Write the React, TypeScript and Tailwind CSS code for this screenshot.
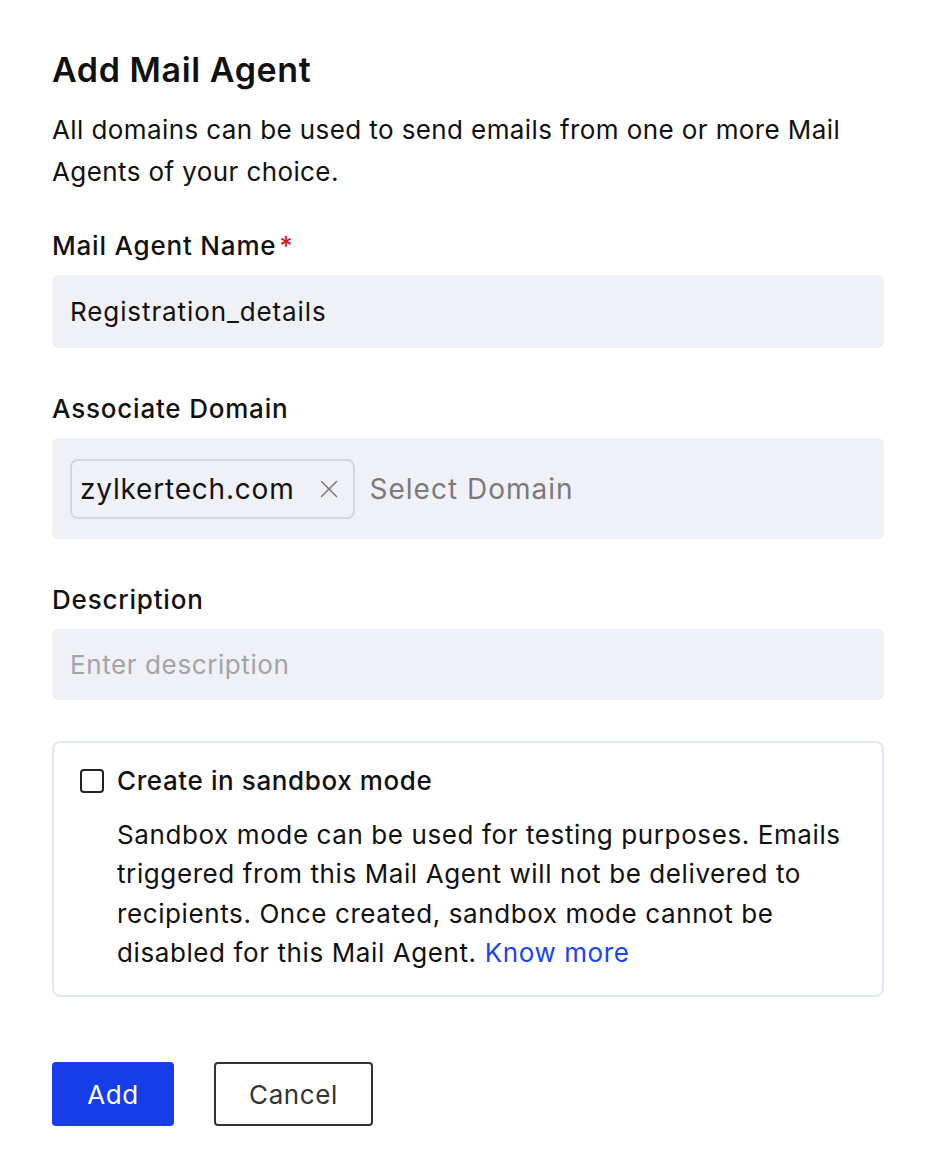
import { X } from "lucide-react";

export default function App() {
  return (
    <div
      className="min-h-[1176px] w-[934px] bg-white text-[#111] pl-[52px] pr-[50px] pt-[46px]"
      style={{ fontFamily: "Inter, 'Noto Sans', sans-serif" }}
    >
      {/* Header */}
      <h1 className="text-[34px] leading-[48px] font-semibold tracking-[0.6px]">Add Mail Agent</h1>
      <p className="mt-[15px] text-[26px] leading-[42px] tracking-[0.4px]">
        All domains can be used to send emails from one or more Mail Agents of your choice.
      </p>

      {/* Mail Agent Name */}
      <label className="block mt-[33px] text-[26px] leading-[40px] font-medium tracking-[0.8px]">
        Mail Agent Name<span className="text-[#e0181e] ml-[3px]">*</span>
      </label>
      <div className="mt-[9px] h-[73px] rounded-[6px] bg-[#f0f1f6] px-[18px] flex items-center text-[26px] tracking-[0.9px]">
        Registration_details
      </div>

      {/* Associate Domain */}
      <label className="block mt-[41px] text-[26px] leading-[40px] font-medium tracking-[0.8px]">
        Associate Domain
      </label>
      <div className="mt-[9px] h-[101px] rounded-[6px] bg-[#f0f1f6] px-[18px] flex items-center gap-[15px]">
        <div className="h-[60px] rounded-[8px] border-2 border-[#d4d6dc] pl-[8px] pr-[9px] flex items-center gap-[19px] text-[28px] tracking-[0.8px]">
          zylkertech.com
          <X className="w-[30px] h-[30px] text-[#7a7a7a]" strokeWidth={1.2} />
        </div>
        <span className="text-[28px] text-[#7a7a7c] tracking-[1px]">Select Domain</span>
      </div>

      {/* Description */}
      <label className="block mt-[41px] text-[26px] leading-[40px] font-medium tracking-[0.8px]">Description</label>
      <div className="mt-[9px] h-[71px] rounded-[6px] bg-[#f0f1f6] px-[18px] flex items-center text-[26px] text-[#a3a3a8] tracking-[0.6px]">
        Enter description
      </div>

      {/* Sandbox */}
      <div className="mt-[41px] rounded-[8px] border-2 border-[#e1e8f3] pl-[26px] pr-[24px] pt-[18px] pb-[23px]">
        <div className="flex items-center gap-[13px]">
          <div className="w-[24px] h-[24px] rounded-[4px] border-2 border-[#222]" />
          <span className="text-[26px] leading-[40px] font-medium tracking-[0.6px]">Create in sandbox mode</span>
        </div>
        <p className="mt-[14px] pl-[37px] text-[26px] leading-[39.3px] tracking-[0.6px]">
          Sandbox mode can be used for testing purposes. Emails triggered from this Mail Agent will not be
          delivered to recipients. Once created, sandbox mode cannot be disabled for this Mail Agent.{" "}
          <a className="text-[#1a44ee]">Know more</a>
        </p>
      </div>

      {/* Actions */}
      <div className="mt-[65px] flex gap-[40px]">
        <button className="h-[64px] w-[122px] rounded-[4px] bg-[#163de8] text-white text-[26px] tracking-[0.6px]">
          Add
        </button>
        <button className="h-[64px] w-[159px] rounded-[4px] border-2 border-[#333] text-[#333] text-[26px] tracking-[0.6px]">
          Cancel
        </button>
      </div>
    </div>
  );
}
